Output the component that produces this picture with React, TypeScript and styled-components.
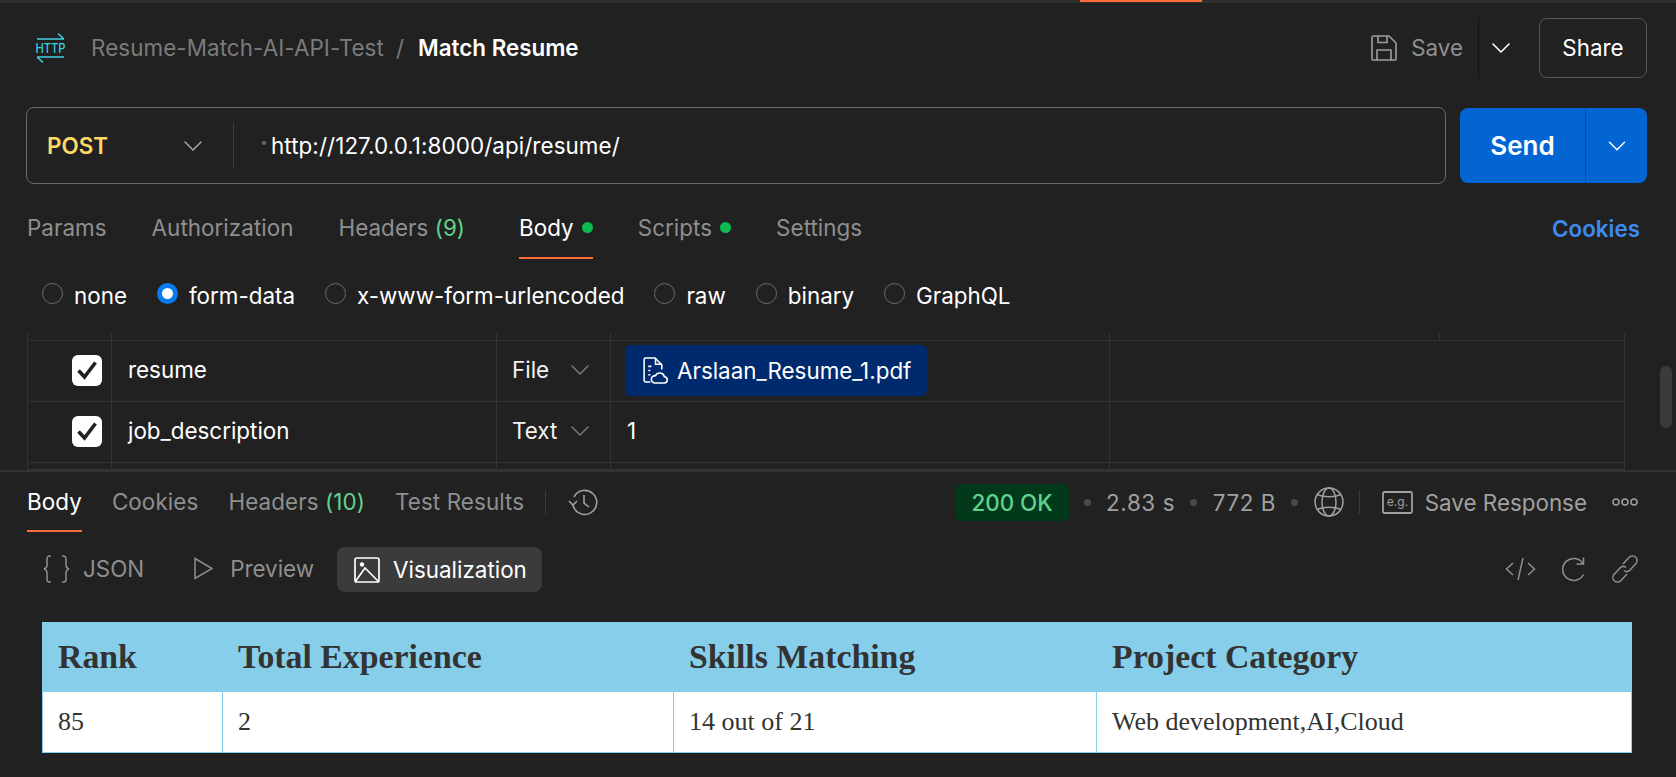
import styled, { createGlobalStyle } from 'styled-components';
import { ChevronDown } from 'lucide-react';

const GlobalStyle = createGlobalStyle`
	html, body {
		margin: 0;
		padding: 0;
		background: #212121;
		overflow: hidden;
	}
	* {
		box-sizing: border-box;
	}
`;

const Page = styled.div`
	width: 1676px;
	height: 777px;
	overflow: hidden;
	background: #212121;
	color: #fff;
	font-family: Inter, 'Liberation Sans', sans-serif;
	font-size: 22.4px;
	display: flex;
	flex-direction: column;
`;

const TopStrip = styled.div`
	height: 3px;
	background: #2e2e2e;
	flex: none;
`;

const ActiveStrip = styled.div`
	height: 2px;
	width: 122px;
	margin-left: 1080px;
	background: #ff6c37;
`;

const Header = styled.header`
	height: 90px;
	margin-bottom: 14px;
	flex: none;
	display: flex;
	align-items: center;
	padding: 0 29px 0 35px;
`;

const HttpIcon = styled.svg`
	width: 31px;
	height: 30px;
	margin-right: 25px;
	overflow: visible;
`;

const Crumb = styled.span`
	color: #7b7b7b;
	letter-spacing: 0.08px;
	margin-top: -2px;
`;

const Slash = styled(Crumb)`
	margin: -2px 14px 0 12px;
`;

const RequestName = styled.span`
	font-weight: 600;
	margin-top: -2px;
`;

const HeaderActions = styled.div`
	margin-left: auto;
	display: flex;
	align-items: center;
	color: #9e9e9e;
`;

const SaveLabel = styled.span`
	margin: -2px 15px 0 14px;
	color: #8f8f8f;
`;

const SaveCaret = styled.div`
	height: 60px;
	width: 61px;
	border-left: 1px solid #111;
	display: flex;
	align-items: center;
	color: #fff;
	padding-left: 6px;
`;

const ShareButton = styled.button`
	width: 108px;
	height: 60px;
	padding: 0 0 2px;
	background: transparent;
	border: 1px solid #555;
	border-radius: 8px;
	color: #fff;
	font: inherit;
`;

const UrlRow = styled.div`
	flex: none;
	height: 77px;
	padding: 0 29px 0 26px;
	display: flex;
	gap: 14px;
`;

const UrlBox = styled.div`
	flex: 1;
	border: 1px solid #6a6a6a;
	border-radius: 8px;
	display: flex;
	align-items: center;
`;

const Method = styled.div`
	width: 207px;
	height: 46px;
	padding: 0 24px 0 20px;
	display: flex;
	align-items: center;
	justify-content: space-between;
	border-right: 1px solid #3d3d3d;
	color: #a6a6a6;
	b {
		color: #ffd966;
		font-weight: 600;
	}
`;

const UrlDot = styled.span`
	width: 4px;
	height: 4px;
	border-radius: 50%;
	background: #6d6d6d;
	margin: 0 5px 6px 28px;
`;

const UrlText = styled.span`
	letter-spacing: 0.08px;
`;

const SendGroup = styled.div`
	width: 187px;
	height: 75px;
	margin-top: 1px;
	display: flex;
	background: #0265d2;
	border-radius: 8px;
	overflow: hidden;
`;

const SendLabel = styled.div`
	width: 126px;
	display: flex;
	align-items: center;
	justify-content: center;
	font-weight: 600;
	font-size: 26px;
	border-right: 1px solid #0150aa;
`;

const SendCaret = styled.div`
	flex: 1;
	display: flex;
	align-items: center;
	justify-content: center;
`;

const RequestTabs = styled.nav`
	flex: none;
	margin-top: 13px;
	height: 62px;
	padding: 0 36px 0 27px;
	display: flex;
	gap: 45px;
`;

const Tab = styled.div<{ $active?: boolean }>`
	height: 100%;
	display: flex;
	align-items: center;
	gap: 8px;
	letter-spacing: 0.05px;
	color: ${(p) => (p.$active ? '#fff' : '#8f8f8f')};
	border-bottom: 2px solid ${(p) => (p.$active ? '#ff6c37' : 'transparent')};
	${(p) => p.$active && 'margin-left: 9px;'}
`;

const Count = styled.span`
	color: #5fd38d;
`;

const GreenDot = styled.span`
	width: 11px;
	height: 11px;
	border-radius: 50%;
	background: #0cbb52;
`;

const CookiesLink = styled.div`
	margin-left: auto;
	display: flex;
	align-items: center;
	color: #3d8bf0;
	font-weight: 600;
`;

const BodyTypes = styled.div`
	flex: none;
	height: 74px;
	padding: 0 0 2px 42px;
	display: flex;
	align-items: center;
	gap: 30px;
`;

const RadioOption = styled.label`
	display: flex;
	align-items: center;
	gap: 11px;
`;

const Radio = styled.span<{ $checked?: boolean }>`
	width: 21px;
	height: 21px;
	border-radius: 50%;
	margin-top: -3px;
	${(p) =>
		p.$checked
			? 'border: 5px solid #097bed; background: #fff;'
			: 'border: 1px solid #6b6b6b;'}
`;

const FormArea = styled.div`
	flex: none;
	height: 137px;
	overflow: hidden;
	display: flex;
	position: relative;
`;

const FormGrid = styled.div`
	margin-left: 27px;
	width: 1598px;
	border-left: 1px solid #333;
	border-right: 1px solid #333;
`;

const FormRow = styled.div<{ $height: number }>`
	height: ${(p) => p.$height}px;
	display: grid;
	grid-template-columns: 84px 385px 114px 499px 330px 1fr;
	border-bottom: 1px solid #333;
`;

const FormCell = styled.div`
	display: flex;
	align-items: center;
	border-right: 1px solid #333;
	padding: 0 0 3px 16px;
	&:last-child {
		border-right: 0;
	}
`;

const StubCell = styled(FormCell)<{ $plain?: boolean }>`
	padding: 0;
	${(p) => p.$plain && 'border-right-color: transparent;'}
`;

const CheckCell = styled(FormCell)`
	padding: 0 0 2px 44px;
`;

const CheckBox = styled.span`
	width: 30px;
	height: 31px;
	border-radius: 6px;
	background: #fff;
	display: flex;
	align-items: center;
	justify-content: center;
`;

const TypeCell = styled(FormCell)`
	justify-content: space-between;
	padding: 0 14px 3px 15px;
	color: #f2f2f2;
	svg {
		color: #7a7a7a;
	}
`;

const ChipCell = styled(FormCell)`
	padding: 0 0 2px 14px;
`;

const FileChip = styled.div`
	height: 51px;
	width: 302px;
	background: #002a6e;
	border-radius: 6px;
	display: flex;
	align-items: center;
	gap: 9px;
	padding-left: 16px;
`;

const Scrollbar = styled.div`
	position: absolute;
	left: 1660px;
	top: 33px;
	width: 12px;
	height: 62px;
	border-radius: 6px;
	background: #3b3b3b;
`;

const ResponseTabs = styled.div`
	flex: none;
	height: 62px;
	border-top: 2px solid #333;
	padding: 0 38px 0 27px;
	display: flex;
	align-items: center;
	color: #8f8f8f;
`;

const ResponseTab = styled.div<{ $active?: boolean }>`
	height: 100%;
	display: flex;
	align-items: center;
	margin-right: 30px;
	gap: 8px;
	letter-spacing: 0.1px;
	color: ${(p) => (p.$active ? '#fff' : '#8f8f8f')};
	border-bottom: 2px solid ${(p) => (p.$active ? '#ff6c37' : 'transparent')};
`;

const VDivider = styled.span`
	width: 1px;
	height: 24px;
	background: #3a3a3a;
	margin: 0 22px 0 -9px;
`;

const HistoryIcon = styled.svg`
	width: 31px;
	height: 30px;
	color: #a0a0a0;
`;

const ResponseMeta = styled.div`
	margin-left: auto;
	display: flex;
	align-items: center;
	color: #a0a0a0;
`;

const StatusPill = styled.div`
	width: 113px;
	height: 37px;
	background: #02391a;
	color: #5fd38d;
	border-radius: 6px;
	font-weight: 500;
	display: flex;
	align-items: center;
	justify-content: center;
`;

const MetaDot = styled.span`
	width: 7px;
	height: 7px;
	border-radius: 50%;
	background: #4a4a4a;
	margin: 0 15.3px;
`;

const MetaValue = styled.span`
	letter-spacing: 0.6px;
`;

const MetaDivider = styled(VDivider)`
	margin: 0 22px 0 15px;
`;

const MetaIcon = styled.svg`
	color: #a0a0a0;
	flex: none;
`;

const SaveResponse = styled.span`
	margin: 0 25px 0 12px;
`;

const FormatBar = styled.div`
	flex: none;
	height: 60px;
	padding: 14px 38px 0 43px;
	display: flex;
	align-items: flex-start;
	color: #8f8f8f;
`;

const FormatItem = styled.div<{ $active?: boolean }>`
	height: 45px;
	display: flex;
	align-items: center;
	gap: 13px;
	border-radius: 8px;
	${(p) =>
		p.$active
			? 'background: #3b3b3b; color: #fff; padding: 0 15px 0 17px; margin-top: 1px;'
			: ''}
`;

const FormatPreview = styled(FormatItem)`
	margin-left: 50px;
	margin-right: 23px;
	gap: 17px;
`;

const FormatTools = styled.div`
	margin-left: auto;
	height: 45px;
	display: flex;
	align-items: center;
	gap: 25px;
`;

const VisualWrap = styled.div`
	flex: none;
	margin: 30px 0 0 42px;
	width: 1590px;
`;

const ResultTable = styled.table`
	width: 100%;
	border-collapse: collapse;
	table-layout: fixed;
	font-family: 'Liberation Serif', 'Times New Roman', serif;
	color: #333;
	background: #fff;
`;

const HeadCell = styled.th<{ $width?: number }>`
	background: #87ceeb;
	height: 69px;
	padding: 0 15px;
	text-align: left;
	font-size: 33.8px;
	font-weight: 700;
	border: 1px solid #87ceeb;
	width: ${(p) => (p.$width ? `${p.$width}px` : 'auto')};
`;

const DataCell = styled.td`
	height: 61px;
	padding: 0 15px;
	font-size: 26px;
	border: 1px solid #87ceeb;
`;

const bodyTypes = ['none', 'form-data', 'x-www-form-urlencoded', 'raw', 'binary', 'GraphQL'];

const Check = () => (
	<svg width="22" height="22" viewBox="0 0 22 22" fill="none" stroke="#212121" strokeWidth="3.6">
		<path d="M2.500 11.500 8.500 18 19.500 3.500" />
	</svg>
);

export default function App() {
	return (
		<Page>
			<GlobalStyle />
			<TopStrip>
				<ActiveStrip />
			</TopStrip>
			<Header>
				<HttpIcon viewBox="0 0 31 30" fill="none" stroke="#3fd0e0" strokeWidth="1.5">
					<path d="M2 6h27M23 .5 29 6" />
					<text
						x="15.5"
						y="20"
						textAnchor="middle"
						fontSize="13"
						fontWeight="500"
						fontFamily="Inter, sans-serif"
						fill="#3fd0e0"
						stroke="none"
						textLength="30"
						lengthAdjust="spacingAndGlyphs"
					>
						HTTP
					</text>
					<path d="M2 24h27M2 24l6 5.500" />
				</HttpIcon>
				<Crumb>Resume-Match-AI-API-Test</Crumb>
				<Slash>/</Slash>
				<RequestName>Match Resume</RequestName>
				<HeaderActions>
					<svg width="26" height="26" viewBox="0 0 26 26" fill="none" stroke="currentColor" strokeWidth="1.6">
						<path d="M1 2.500A1.500 1.500 0 0 1 2.500 1H18l7 7v15.500a1.500 1.500 0 0 1-1.500 1.500h-21A1.500 1.500 0 0 1 1 23.500Z" />
						<path d="M7 1v6.500h9V1M6 25V15h14v10" />
					</svg>
					<SaveLabel>Save</SaveLabel>
					<SaveCaret>
						<ChevronDown size={32} strokeWidth={1.2} />
					</SaveCaret>
					<ShareButton>Share</ShareButton>
				</HeaderActions>
			</Header>
			<UrlRow>
				<UrlBox>
					<Method>
						<b>POST</b>
						<ChevronDown size={32} strokeWidth={1.1} />
					</Method>
					<UrlDot />
					<UrlText>http://127.0.0.1:8000/api/resume/</UrlText>
				</UrlBox>
				<SendGroup>
					<SendLabel>Send</SendLabel>
					<SendCaret>
						<ChevronDown size={30} strokeWidth={1.2} />
					</SendCaret>
				</SendGroup>
			</UrlRow>
			<RequestTabs>
				<Tab>Params</Tab>
				<Tab>Authorization</Tab>
				<Tab>
					<span>
						Headers <Count>(9)</Count>
					</span>
				</Tab>
				<Tab $active>
					Body <GreenDot />
				</Tab>
				<Tab>
					Scripts <GreenDot />
				</Tab>
				<Tab>Settings</Tab>
				<CookiesLink>Cookies</CookiesLink>
			</RequestTabs>
			<BodyTypes>
				{bodyTypes.map((t) => (
					<RadioOption key={t}>
						<Radio $checked={t === 'form-data'} />
						{t}
					</RadioOption>
				))}
			</BodyTypes>
			<FormArea>
				<FormGrid>
					<FormRow $height={8}>
						<StubCell />
						<StubCell />
						<StubCell />
						<StubCell />
						<StubCell />
						<StubCell />
					</FormRow>
					<FormRow $height={61}>
						<CheckCell>
							<CheckBox>
								<Check />
							</CheckBox>
						</CheckCell>
						<FormCell>resume</FormCell>
						<TypeCell>
							File
							<ChevronDown size={32} strokeWidth={1.1} />
						</TypeCell>
						<ChipCell>
							<FileChip>
								<svg width="27" height="27" viewBox="0 0 26 26" fill="none" stroke="#fff" strokeWidth="1.5">
									<path d="M9 24H4.500A1.500 1.500 0 0 1 3 22.500V2.500A1.500 1.500 0 0 1 4.500 1h9L20 7.500V12" />
									<path d="M14 1v6h6M7 9h3M7 13h2M7 17h2" />
									<path d="M13 25h9a3 3 0 0 0 .5-6 4.500 4.500 0 0 0-8.500-1 3.500 3.500 0 0 0-1 7Z" />
								</svg>
								Arslaan_Resume_1.pdf
							</FileChip>
						</ChipCell>
						<StubCell $plain />
						<StubCell />
					</FormRow>
					<FormRow $height={61}>
						<CheckCell>
							<CheckBox>
								<Check />
							</CheckBox>
						</CheckCell>
						<FormCell>job_description</FormCell>
						<TypeCell>
							Text
							<ChevronDown size={32} strokeWidth={1.1} />
						</TypeCell>
						<FormCell>1</FormCell>
						<StubCell $plain />
						<StubCell />
					</FormRow>
					<FormRow $height={7}>
						<StubCell />
						<StubCell />
						<StubCell />
						<StubCell />
						<StubCell $plain />
						<StubCell />
					</FormRow>
				</FormGrid>
				<Scrollbar />
			</FormArea>
			<ResponseTabs>
				<ResponseTab $active>Body</ResponseTab>
				<ResponseTab>Cookies</ResponseTab>
				<ResponseTab>
					<span>
						Headers <Count>(10)</Count>
					</span>
				</ResponseTab>
				<ResponseTab>Test Results</ResponseTab>
				<VDivider />
				<HistoryIcon viewBox="0 0 31 30" fill="none" stroke="currentColor" strokeWidth="1.6">
					<path d="M5 18a12 12 0 1 0 1-8" />
					<path d="M1 14l4 4 4-4M16 8v8l5 4" />
				</HistoryIcon>
				<ResponseMeta>
					<StatusPill>200 OK</StatusPill>
					<MetaDot />
					<MetaValue>2.83 s</MetaValue>
					<MetaDot />
					<MetaValue>772 B</MetaValue>
					<MetaDot />
					<MetaIcon width="30" height="30" viewBox="0 0 30 30" fill="none" stroke="currentColor" strokeWidth="1.5">
						<circle cx="15" cy="15" r="14" />
						<ellipse cx="15" cy="15" rx="7" ry="14" />
						<path d="M3 7.500c7 3 17 3 24 0M3 22.500c7-3 17-3 24 0" />
					</MetaIcon>
					<MetaDivider />
					<MetaIcon width="31" height="23" viewBox="0 0 31 23" fill="none" stroke="currentColor" strokeWidth="1.8">
						<rect x="1" y="1" width="29" height="21" rx="1.500" />
						<text x="15.500" y="15" textAnchor="middle" fontSize="12" fontFamily="Inter, sans-serif" fill="currentColor" stroke="none">
							e.g.
						</text>
					</MetaIcon>
					<SaveResponse>Save Response</SaveResponse>
					<MetaIcon width="26" height="8" viewBox="0 0 26 8" fill="none" stroke="currentColor" strokeWidth="1.5">
						<circle cx="4" cy="4" r="3" />
						<circle cx="13" cy="4" r="3" />
						<circle cx="22" cy="4" r="3" />
					</MetaIcon>
				</ResponseMeta>
			</ResponseTabs>
			<FormatBar>
				<FormatItem>
					<svg width="27" height="28" viewBox="0 0 27 28" fill="none" stroke="currentColor" strokeWidth="1.500">
						<path d="M8 1H6.500A2.500 2.500 0 0 0 4 3.500V10c0 2-1 3.500-3 4 2 .5 3 2 3 4v6.500A2.500 2.500 0 0 0 6.500 27H8" />
						<path d="M19 1h1.500A2.500 2.500 0 0 1 23 3.500V10c0 2 1 3.500 3 4-2 .5-3 2-3 4v6.500a2.500 2.500 0 0 1-2.500 2.500H19" />
					</svg>
					JSON
				</FormatItem>
				<FormatPreview>
					<svg width="19" height="23" viewBox="0 0 19 23" fill="none" stroke="currentColor" strokeWidth="1.500">
						<path d="M1 1.500 18 11.500 1 21.500Z" />
					</svg>
					Preview
				</FormatPreview>
				<FormatItem $active>
					<svg width="26" height="26" viewBox="0 0 26 26" fill="none" stroke="#fff" strokeWidth="1.700">
						<rect x="1" y="1" width="24" height="24" rx="2" />
						<circle cx="8" cy="7.500" r="2.200" fill="#fff" stroke="none" />
						<path d="M1 25 11 11l14 14" />
					</svg>
					Visualization
				</FormatItem>
				<FormatTools>
					<svg width="31" height="26" viewBox="0 0 31 26" fill="none" stroke="currentColor" strokeWidth="1.500">
						<path d="M8 7 1.500 13 8 19M23 7l6.500 6-6.500 6M18 2l-5 22" />
					</svg>
					<svg width="26" height="26" viewBox="0 0 26 26" fill="none" stroke="currentColor" strokeWidth="1.500">
						<path d="M22 7.500a11 11 0 1 0 .5 11" />
						<path d="M22.500 1.500v6.500h-7" />
					</svg>
					<svg width="26" height="28" viewBox="0 0 26 28" fill="none" stroke="currentColor" strokeWidth="1.500">
						<path d="M11 9 17 2.500a4.500 4.500 0 0 1 7 6L18 15a4.500 4.500 0 0 1-6 .5" />
						<path d="M15 19 9 25.500a4.500 4.500 0 0 1-7-6L8 13a4.500 4.500 0 0 1 6-.5" />
					</svg>
				</FormatTools>
			</FormatBar>
			<VisualWrap>
				<ResultTable>
					<thead>
						<tr>
							<HeadCell $width={180}>Rank</HeadCell>
							<HeadCell $width={451}>Total Experience</HeadCell>
							<HeadCell $width={423}>Skills Matching</HeadCell>
							<HeadCell>Project Category</HeadCell>
						</tr>
					</thead>
					<tbody>
						<tr>
							<DataCell>85</DataCell>
							<DataCell>2</DataCell>
							<DataCell>14 out of 21</DataCell>
							<DataCell>Web development,AI,Cloud</DataCell>
						</tr>
					</tbody>
				</ResultTable>
			</VisualWrap>
		</Page>
	);
}
